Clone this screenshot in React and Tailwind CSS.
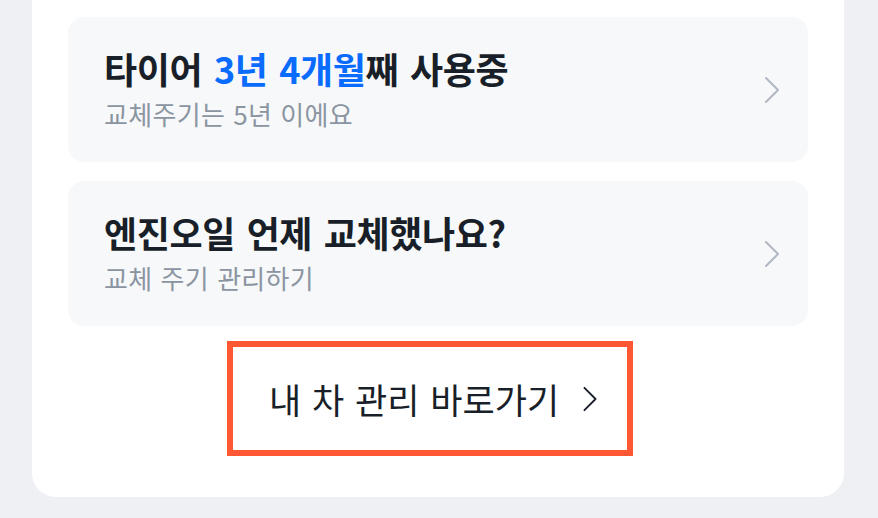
import { useMemo } from "react";

const FONT = { fontFamily: '"Noto Sans CJK KR", "Noto Sans", sans-serif' };

function Chevron({ className, strokeWidth = 2 }) {
  return (
    <svg viewBox="0 0 16 28" className={className} fill="none" aria-hidden="true">
      <path
        d="M2 2 L14 14 L2 26"
        stroke="currentColor"
        strokeWidth={strokeWidth}
        strokeLinecap="round"
        strokeLinejoin="round"
      />
    </svg>
  );
}

function ReminderCard({ title, subtitle }) {
  return (
    <button
      type="button"
      className="flex h-[145px] w-full items-center justify-between rounded-[16px] bg-[#f7f8fa] pb-[3px] pl-[36px] pr-[28px] text-left"
    >
      <div className="flex flex-col">
        <p className="text-[36px] leading-[44px] font-bold tracking-[-0.4px] [word-spacing:4px] text-[#191f28]">
          {title}
        </p>
        <p className="mt-[8px] text-[26px] leading-[32px] tracking-[0.3px] [word-spacing:2px] text-[#8b95a1]">
          {subtitle}
        </p>
      </div>
      <Chevron className="mt-[3px] h-[28px] w-[16px] text-[#b0b8c1]" />
    </button>
  );
}

export default function App() {
  const reminders = useMemo(
    () => [
      {
        id: "tire",
        title: (
          <>
            타이어 <span className="text-[#0a6cff]">3년 4개월</span>째 사용중
          </>
        ),
        subtitle: "교체주기는 5년 이에요",
      },
      {
        id: "oil",
        title: "엔진오일 언제 교체했나요?",
        subtitle: "교체 주기 관리하기",
      },
    ],
    []
  );

  return (
    <div className="h-[518px] w-full overflow-hidden bg-[#eff0f4]" style={FONT}>
      <div className="ml-[32px] w-[812px] rounded-b-[24px] bg-white px-[36px] pt-[17px] pb-[41px]">
        <div className="flex flex-col gap-[19px]">
          {reminders.map((item) => (
            <ReminderCard key={item.id} title={item.title} subtitle={item.subtitle} />
          ))}
        </div>

        <div className="mt-[15px] flex justify-center pr-[16px]">
          <button
            type="button"
            className="flex h-[115px] w-[406px] items-center border-[6px] border-[#ff5733] pl-[36px] pr-[28px] text-[#191f28]"
          >
            <span className="text-[35px] leading-[44px] font-normal [word-spacing:3px]">
              내 차 관리 바로가기
            </span>
            <Chevron className="ml-auto h-[26px] w-[18px]" strokeWidth={2} />
          </button>
        </div>
      </div>
    </div>
  );
}
